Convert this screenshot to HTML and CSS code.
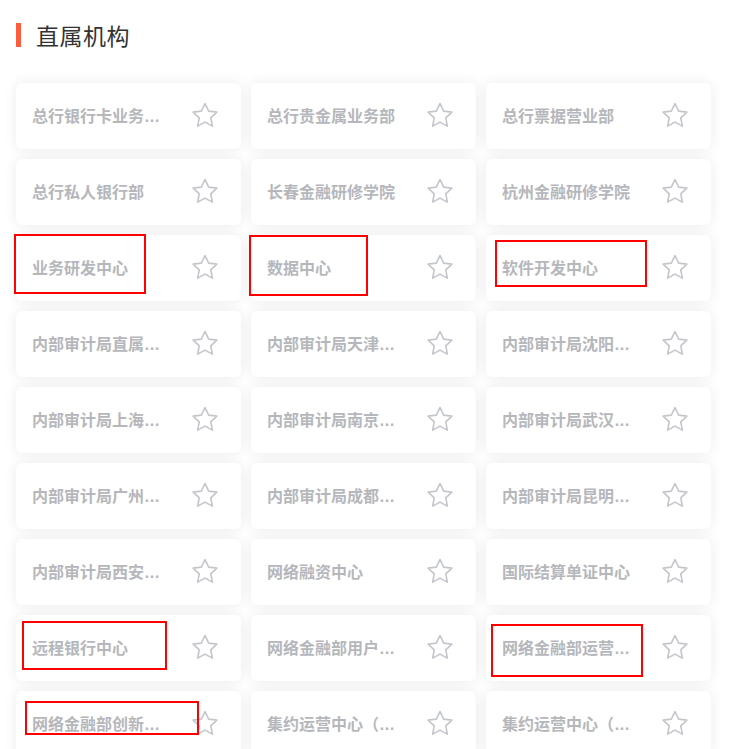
FILE: index.html
```html
<!DOCTYPE html>
<html lang="zh-CN">
<head>
<meta charset="utf-8">
<title>直属机构</title>
<link rel="stylesheet" href="styles.css">
</head>
<body>
<div class="page">
  <h2 class="title"><span class="bar"></span><span class="title-text">直属机构</span></h2>
  <div class="grid">
    <div class="card"><span class="name">总行银行卡业务中心</span><svg class="star" viewBox="0 0 24 24"><path d="M12 2l2.9 6.1 6.6.8-4.9 4.6 1.3 6.6L12 16.9l-5.9 3.2 1.3-6.6-4.9-4.6 6.6-.8z"/></svg></div>
    <div class="card"><span class="name">总行贵金属业务部</span><svg class="star" viewBox="0 0 24 24"><path d="M12 2l2.9 6.1 6.6.8-4.9 4.6 1.3 6.6L12 16.9l-5.9 3.2 1.3-6.6-4.9-4.6 6.6-.8z"/></svg></div>
    <div class="card"><span class="name">总行票据营业部</span><svg class="star" viewBox="0 0 24 24"><path d="M12 2l2.9 6.1 6.6.8-4.9 4.6 1.3 6.6L12 16.9l-5.9 3.2 1.3-6.6-4.9-4.6 6.6-.8z"/></svg></div>

    <div class="card"><span class="name">总行私人银行部</span><svg class="star" viewBox="0 0 24 24"><path d="M12 2l2.9 6.1 6.6.8-4.9 4.6 1.3 6.6L12 16.9l-5.9 3.2 1.3-6.6-4.9-4.6 6.6-.8z"/></svg></div>
    <div class="card"><span class="name">长春金融研修学院</span><svg class="star" viewBox="0 0 24 24"><path d="M12 2l2.9 6.1 6.6.8-4.9 4.6 1.3 6.6L12 16.9l-5.9 3.2 1.3-6.6-4.9-4.6 6.6-.8z"/></svg></div>
    <div class="card"><span class="name">杭州金融研修学院</span><svg class="star" viewBox="0 0 24 24"><path d="M12 2l2.9 6.1 6.6.8-4.9 4.6 1.3 6.6L12 16.9l-5.9 3.2 1.3-6.6-4.9-4.6 6.6-.8z"/></svg></div>

    <div class="card"><span class="name">业务研发中心</span><svg class="star" viewBox="0 0 24 24"><path d="M12 2l2.9 6.1 6.6.8-4.9 4.6 1.3 6.6L12 16.9l-5.9 3.2 1.3-6.6-4.9-4.6 6.6-.8z"/></svg></div>
    <div class="card"><span class="name">数据中心</span><svg class="star" viewBox="0 0 24 24"><path d="M12 2l2.9 6.1 6.6.8-4.9 4.6 1.3 6.6L12 16.9l-5.9 3.2 1.3-6.6-4.9-4.6 6.6-.8z"/></svg></div>
    <div class="card"><span class="name">软件开发中心</span><svg class="star" viewBox="0 0 24 24"><path d="M12 2l2.9 6.1 6.6.8-4.9 4.6 1.3 6.6L12 16.9l-5.9 3.2 1.3-6.6-4.9-4.6 6.6-.8z"/></svg></div>

    <div class="card"><span class="name">内部审计局直属分局</span><svg class="star" viewBox="0 0 24 24"><path d="M12 2l2.9 6.1 6.6.8-4.9 4.6 1.3 6.6L12 16.9l-5.9 3.2 1.3-6.6-4.9-4.6 6.6-.8z"/></svg></div>
    <div class="card"><span class="name">内部审计局天津分局</span><svg class="star" viewBox="0 0 24 24"><path d="M12 2l2.9 6.1 6.6.8-4.9 4.6 1.3 6.6L12 16.9l-5.9 3.2 1.3-6.6-4.9-4.6 6.6-.8z"/></svg></div>
    <div class="card"><span class="name">内部审计局沈阳分局</span><svg class="star" viewBox="0 0 24 24"><path d="M12 2l2.9 6.1 6.6.8-4.9 4.6 1.3 6.6L12 16.9l-5.9 3.2 1.3-6.6-4.9-4.6 6.6-.8z"/></svg></div>

    <div class="card"><span class="name">内部审计局上海分局</span><svg class="star" viewBox="0 0 24 24"><path d="M12 2l2.9 6.1 6.6.8-4.9 4.6 1.3 6.6L12 16.9l-5.9 3.2 1.3-6.6-4.9-4.6 6.6-.8z"/></svg></div>
    <div class="card"><span class="name">内部审计局南京分局</span><svg class="star" viewBox="0 0 24 24"><path d="M12 2l2.9 6.1 6.6.8-4.9 4.6 1.3 6.6L12 16.9l-5.9 3.2 1.3-6.6-4.9-4.6 6.6-.8z"/></svg></div>
    <div class="card"><span class="name">内部审计局武汉分局</span><svg class="star" viewBox="0 0 24 24"><path d="M12 2l2.9 6.1 6.6.8-4.9 4.6 1.3 6.6L12 16.9l-5.9 3.2 1.3-6.6-4.9-4.6 6.6-.8z"/></svg></div>

    <div class="card"><span class="name">内部审计局广州分局</span><svg class="star" viewBox="0 0 24 24"><path d="M12 2l2.9 6.1 6.6.8-4.9 4.6 1.3 6.6L12 16.9l-5.9 3.2 1.3-6.6-4.9-4.6 6.6-.8z"/></svg></div>
    <div class="card"><span class="name">内部审计局成都分局</span><svg class="star" viewBox="0 0 24 24"><path d="M12 2l2.9 6.1 6.6.8-4.9 4.6 1.3 6.6L12 16.9l-5.9 3.2 1.3-6.6-4.9-4.6 6.6-.8z"/></svg></div>
    <div class="card"><span class="name">内部审计局昆明分局</span><svg class="star" viewBox="0 0 24 24"><path d="M12 2l2.9 6.1 6.6.8-4.9 4.6 1.3 6.6L12 16.9l-5.9 3.2 1.3-6.6-4.9-4.6 6.6-.8z"/></svg></div>

    <div class="card"><span class="name">内部审计局西安分局</span><svg class="star" viewBox="0 0 24 24"><path d="M12 2l2.9 6.1 6.6.8-4.9 4.6 1.3 6.6L12 16.9l-5.9 3.2 1.3-6.6-4.9-4.6 6.6-.8z"/></svg></div>
    <div class="card"><span class="name">网络融资中心</span><svg class="star" viewBox="0 0 24 24"><path d="M12 2l2.9 6.1 6.6.8-4.9 4.6 1.3 6.6L12 16.9l-5.9 3.2 1.3-6.6-4.9-4.6 6.6-.8z"/></svg></div>
    <div class="card"><span class="name">国际结算单证中心</span><svg class="star" viewBox="0 0 24 24"><path d="M12 2l2.9 6.1 6.6.8-4.9 4.6 1.3 6.6L12 16.9l-5.9 3.2 1.3-6.6-4.9-4.6 6.6-.8z"/></svg></div>

    <div class="card"><span class="name">远程银行中心</span><svg class="star" viewBox="0 0 24 24"><path d="M12 2l2.9 6.1 6.6.8-4.9 4.6 1.3 6.6L12 16.9l-5.9 3.2 1.3-6.6-4.9-4.6 6.6-.8z"/></svg></div>
    <div class="card"><span class="name">网络金融部用户体验中心</span><svg class="star" viewBox="0 0 24 24"><path d="M12 2l2.9 6.1 6.6.8-4.9 4.6 1.3 6.6L12 16.9l-5.9 3.2 1.3-6.6-4.9-4.6 6.6-.8z"/></svg></div>
    <div class="card"><span class="name">网络金融部运营中心</span><svg class="star" viewBox="0 0 24 24"><path d="M12 2l2.9 6.1 6.6.8-4.9 4.6 1.3 6.6L12 16.9l-5.9 3.2 1.3-6.6-4.9-4.6 6.6-.8z"/></svg></div>

    <div class="card"><span class="name">网络金融部创新实验室</span><svg class="star" viewBox="0 0 24 24"><path d="M12 2l2.9 6.1 6.6.8-4.9 4.6 1.3 6.6L12 16.9l-5.9 3.2 1.3-6.6-4.9-4.6 6.6-.8z"/></svg></div>
    <div class="card"><span class="name">集约运营中心（上海）</span><svg class="star" viewBox="0 0 24 24"><path d="M12 2l2.9 6.1 6.6.8-4.9 4.6 1.3 6.6L12 16.9l-5.9 3.2 1.3-6.6-4.9-4.6 6.6-.8z"/></svg></div>
    <div class="card"><span class="name">集约运营中心（广州）</span><svg class="star" viewBox="0 0 24 24"><path d="M12 2l2.9 6.1 6.6.8-4.9 4.6 1.3 6.6L12 16.9l-5.9 3.2 1.3-6.6-4.9-4.6 6.6-.8z"/></svg></div>
  </div>

  <div class="mark m1"></div>
  <div class="mark m2"></div>
  <div class="mark m3"></div>
  <div class="mark m4"></div>
  <div class="mark m5"></div>
  <div class="mark m6"></div>
</div>
</body>
</html>
```

FILE: styles.css
```css
* { box-sizing: border-box; }
html, body {
  margin: 0;
  padding: 0;
  background: #ffffff;
}
body {
  font-family: "Noto Sans CJK SC", "Noto Sans", sans-serif;
  overflow: hidden;
  height: 749px;
}
.page {
  position: relative;
  padding: 23px 20px 0 16px;
}
.title {
  margin: 0;
  display: flex;
  align-items: center;
  height: 24px;
  font-weight: 400;
}
.bar {
  width: 5px;
  height: 24px;
  background: #ff5b3d;
  flex: none;
}
.title-text {
  margin-left: 15px;
  font-size: 23px;
  color: #333333;
  line-height: 24px;
  letter-spacing: 0.5px;
}
.grid {
  margin-top: 36px;
  display: grid;
  grid-template-columns: repeat(3, 225px);
  grid-auto-rows: 66px;
  column-gap: 10px;
  row-gap: 10px;
}
.card {
  background: #ffffff;
  border-radius: 6px;
  box-shadow: 0 0 14px rgba(0, 0, 0, 0.08);
  display: flex;
  align-items: center;
  padding: 0 21px 0 16px;
}
.name {
  width: 130px;
  white-space: nowrap;
  overflow: hidden;
  text-overflow: ellipsis;
  font-family: "Liberation Sans", "Noto Sans CJK SC", sans-serif;
  font-size: 16px;
  font-weight: 700;
  color: #b5b7bc;
  line-height: 20px;
  margin-top: 1px;
}
.star {
  margin-left: auto;
  width: 30px;
  height: 30px;
  flex: none;
  fill: none;
  stroke: #c3c6cc;
  stroke-width: 1.3;
  stroke-linejoin: round;
}
.mark {
  position: absolute;
  border: 2px solid #ff0000;
}
.m1 { left: 14px; top: 234px; width: 132px; height: 60px; }
.m2 { left: 249px; top: 235px; width: 119px; height: 61px; }
.m3 { left: 495px; top: 240px; width: 152px; height: 47px; }
.m4 { left: 22px; top: 621px; width: 145px; height: 49px; }
.m5 { left: 25px; top: 701px; width: 174px; height: 34px; }
.m6 { left: 491px; top: 624px; width: 152px; height: 53px; }
```
